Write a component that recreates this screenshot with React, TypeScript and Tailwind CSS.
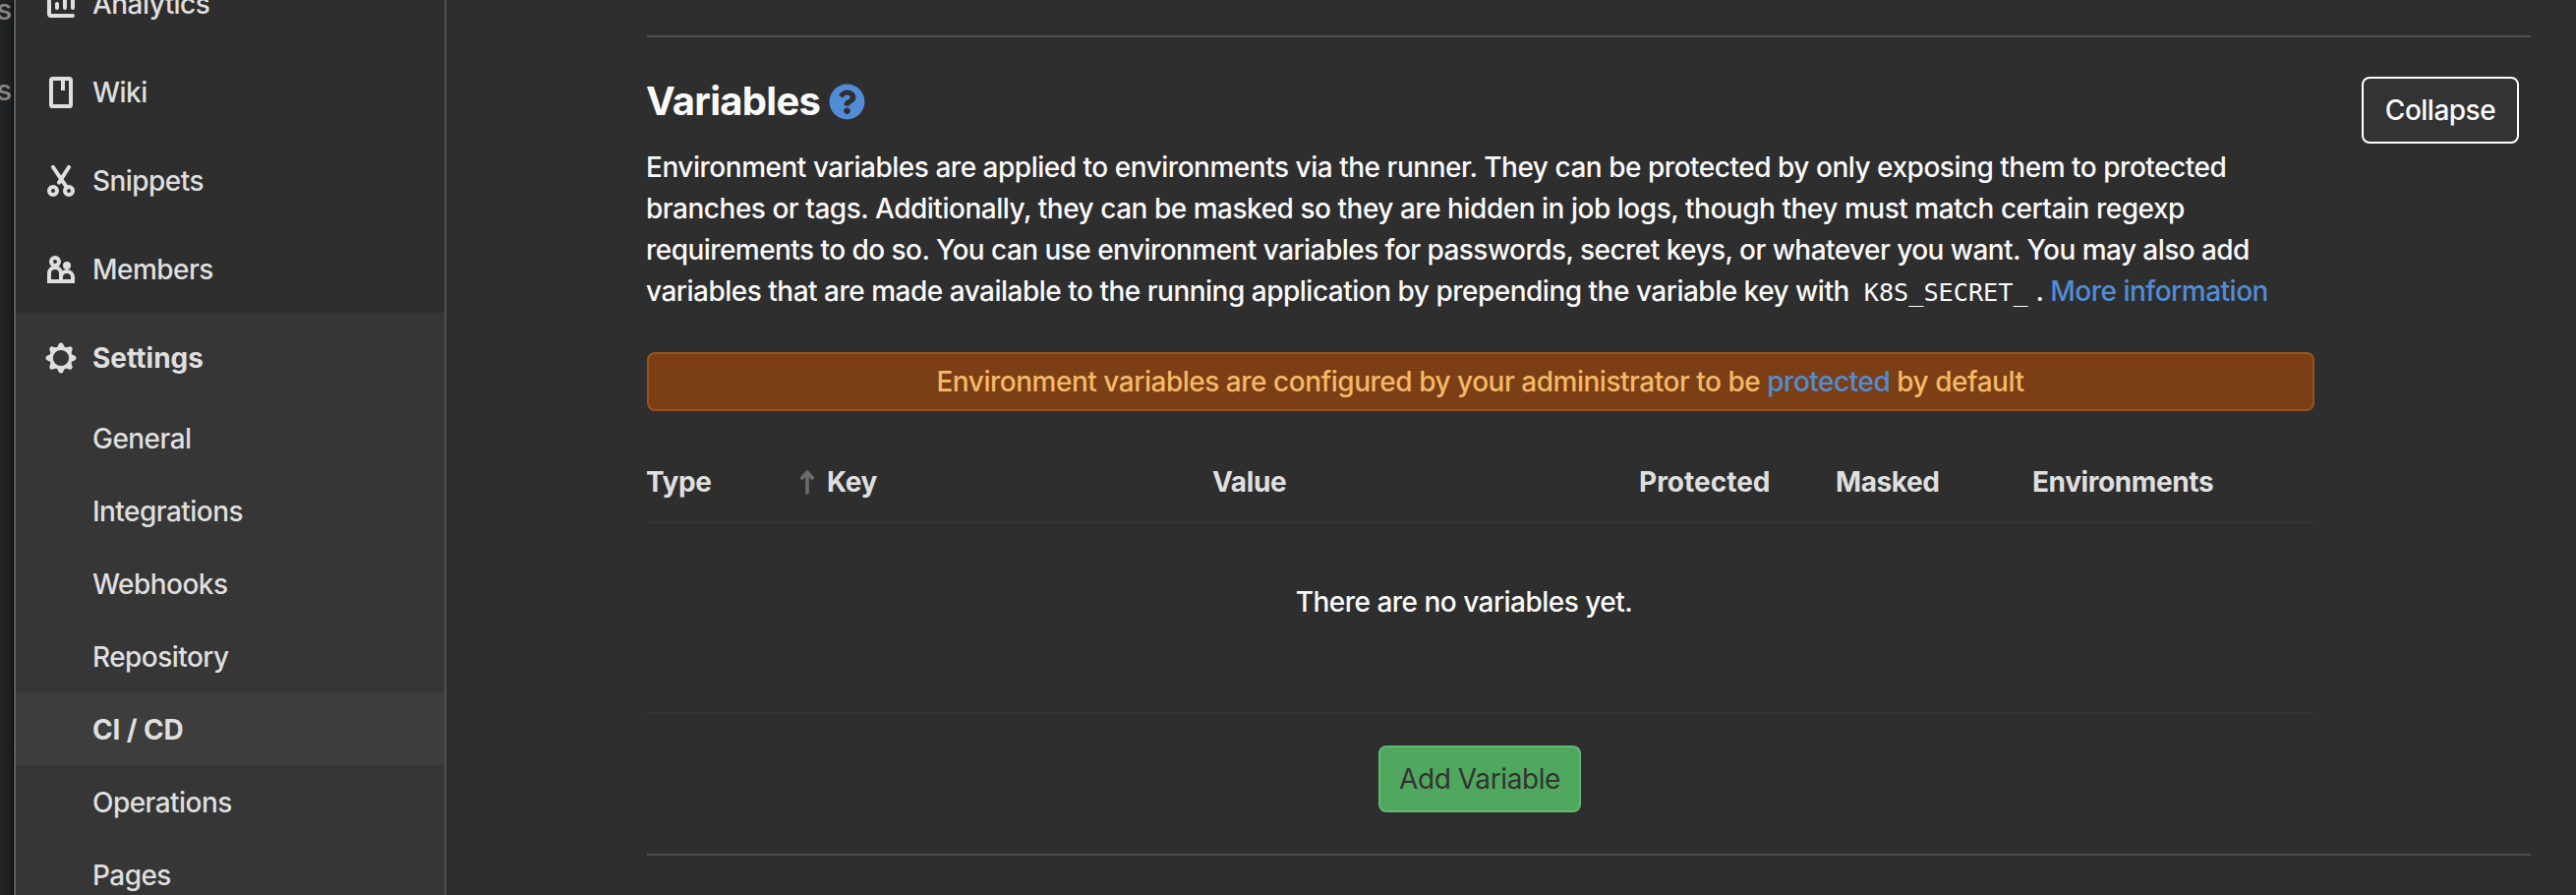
import type { ReactNode } from "react";
import { FaQuestionCircle } from "react-icons/fa";

function Icon({ children }: { children: ReactNode }) {
  return (
    <svg viewBox="0 0 16 16" className="size-8 shrink-0" fill="none" stroke="currentColor" strokeWidth="2">
      {children}
    </svg>
  );
}

const AnalyticsIcon = () => (
  <Icon>
    <path d="M2 1v12a1 1 0 0 0 1 1h11" strokeLinecap="round" />
    <path d="M6 8v2M10 4v6M14 6v4" strokeLinecap="round" />
  </Icon>
);

const WikiIcon = () => (
  <Icon>
    <rect x="3" y="1" width="10" height="14" rx="0.8" />
    <path d="M9 1v6" />
  </Icon>
);

const SnippetsIcon = () => (
  <Icon>
    <circle cx="4" cy="13" r="2" />
    <circle cx="12" cy="13" r="2" />
    <path d="M4 1l7 10.3M12 1L7 8.8" strokeLinecap="round" />
  </Icon>
);

const MembersIcon = () => (
  <Icon>
    <circle cx="5" cy="4" r="2" />
    <circle cx="11" cy="6" r="2" fill="currentColor" stroke="none" />
    <path d="M2 14v-4a3 3 0 0 1 6 0v4z" />
    <path d="M8 14v-2a3 3 0 0 1 6 0v2z" />
  </Icon>
);

const TOOTH_ANGLES = [0, 45, 90, 135, 180, 225, 270, 315];

const SettingsIcon = () => (
  <Icon>
    <circle cx="8" cy="8" r="4.95" strokeWidth="1.8" />
    {TOOTH_ANGLES.map((a) => (
      <path
        key={a}
        d="M6.5 2.7L7.3 1.1a.8.8 0 0 1 1.4 0L9.5 2.7z"
        transform={`rotate(${a} 8 8)`}
        fill="currentColor"
        strokeWidth="0.9"
        strokeLinejoin="round"
      />
    ))}
  </Icon>
);

const navItems = [
  { label: "Analytics", icon: <AnalyticsIcon /> },
  { label: "Wiki", icon: <WikiIcon /> },
  { label: "Snippets", icon: <SnippetsIcon /> },
  { label: "Members", icon: <MembersIcon /> },
];

const settingsItems = ["General", "Integrations", "Webhooks", "Repository", "CI / CD", "Operations", "Pages"];

function Sidebar() {
  return (
    <nav className="flex w-[440px] shrink-0 flex-col border-x-2 border-l-[#616161] border-r-[#4f4f4f] text-[28px] font-[450] tracking-[-0.55px] text-[#dfdfdf]">
      <div className="-mt-[42px]">
        {navItems.map((item) => (
          <a key={item.label} className="flex h-[90px] items-center gap-4 pt-0.5 pl-[30px]">
            {item.icon}
            <span>{item.label}</span>
          </a>
        ))}
      </div>
      <div className="grow bg-[#363636]">
        <a className="flex h-[90px] items-center gap-4 pt-0.5 pl-[30px] font-[650] tracking-[0px]">
          <SettingsIcon />
          <span>Settings</span>
        </a>
        {settingsItems.map((label) => (
          <a
            key={label}
            className={
              label === "CI / CD"
                ? "flex h-[74px] items-center bg-[#3d3d3d] pt-0.5 pl-[78px] font-[650] tracking-[-0.15px]"
                : "flex h-[74px] items-center pt-0.5 pl-[78px]"
            }
          >
            {label}
          </a>
        ))}
      </div>
    </nav>
  );
}

function Variables() {
  return (
    <section className="border-y-2 border-[#4f4f4f] pt-10 pb-[42px]">
      <div className="flex h-[50px] items-start justify-between pr-3">
        <h4 className="-ml-px flex items-center gap-[9px] text-[40px] leading-[50px] font-[650] tracking-[-0.72px] text-[#fafafa]">
          Variables
          <FaQuestionCircle className="size-[37px] text-[#528cd4]" />
        </h4>
        <button className="h-[68px] w-[160px] shrink-0 rounded-lg border-2 border-white bg-[#333333] text-[28px] font-[450] tracking-[-0.5px] text-[#fafafa]">
          Collapse
        </button>
      </div>

      <p className="mt-[21px] -ml-px text-[28px] leading-[42px] font-[450] tracking-[-0.48px] whitespace-nowrap text-[#fafafa]">
        <span className="block">
          Environment variables are applied to environments via the runner. They can be protected by only exposing them
          to protected
        </span>
        <span className="block">
          branches or tags. Additionally, they can be masked so they are hidden in job logs, though they must match
          certain regexp
        </span>
        <span className="block tracking-[-0.55px]">
          requirements to do so. You can use environment variables for passwords, secret keys, or whatever you want. You
          may also add
        </span>
        <span className="block h-[42px] tracking-[-0.5px]">
          variables that are made available to the running application by prepending the variable key with{" "}
          <code className="px-2 font-['DejaVu_Sans_Mono',monospace] text-[25.2px] tracking-normal">K8S_SECRET_</code>.{" "}
          <a className="text-[#528cd4]">More information</a>
        </span>
      </p>

      <div className="w-[1696px]">
        <div className="mt-[41px] flex h-[60px] items-center justify-center rounded-lg border-2 border-[#99531c] bg-[#7b3e15] pr-px text-[28px] font-[450] tracking-[-0.48px] whitespace-pre text-[#f5b966]">
          <span>
            Environment variables are configured by your administrator to be <a className="text-[#528cd4]">protected</a>{" "}
            by default
          </span>
        </div>

        <div className="mt-8 grid h-[82px] grid-cols-[156px_419px_434px_200px_200px_1fr] items-center border-b-2 border-[#333333] text-[28px] font-[650] tracking-[-0.4px] text-[#dfdfdf]">
          <span className="-ml-px">Type</span>
          <span className="flex items-center gap-[13px]">
            <svg
              viewBox="0 0 14 26"
              className="h-[26px] w-3.5"
              fill="none"
              stroke="#6b6b6b"
              strokeWidth="3.6"
              strokeLinecap="round"
              strokeLinejoin="round"
            >
              <path d="M7 24V3.5M1.9 9L7 3l5.1 6" />
            </svg>
            Key
          </span>
          <span>Value</span>
          <span className="tracking-[0px]">Protected</span>
          <span>Masked</span>
          <span>Environments</span>
        </div>

        <div className="h-[194px] border-b-2 border-[#333333] pt-[59px] pr-[34px] text-center text-[28px] leading-[42px] font-[450] tracking-[-0.52px] text-[#fafafa]">
          There are no variables yet.
        </div>

        <div className="mt-8 flex justify-center pr-[2px]">
          <button className="h-[68px] w-[206px] rounded-lg border-2 border-[#61b673] bg-[#50a85e] text-[28px] tracking-[-0.4px] whitespace-nowrap text-[#333333]">
            Add Variable
          </button>
        </div>
      </div>
    </section>
  );
}

export default function App() {
  return (
    <div className="flex h-[910px] w-[2620px] overflow-hidden bg-[#2e2e2e] font-['Inter',sans-serif]">
      <aside className="flex w-3.5 shrink-0 flex-col items-end overflow-hidden border-r border-black bg-linear-to-r from-[#212325] to-[#1b1c1e] pr-px text-[29px] leading-[82px] font-medium text-[#858688]">
        <span className="-mt-[31px]">s</span>
        <span>s</span>
      </aside>
      <Sidebar />
      <main className="w-[2120px] pt-9 pl-[204px]">
        <Variables />
      </main>
    </div>
  );
}
